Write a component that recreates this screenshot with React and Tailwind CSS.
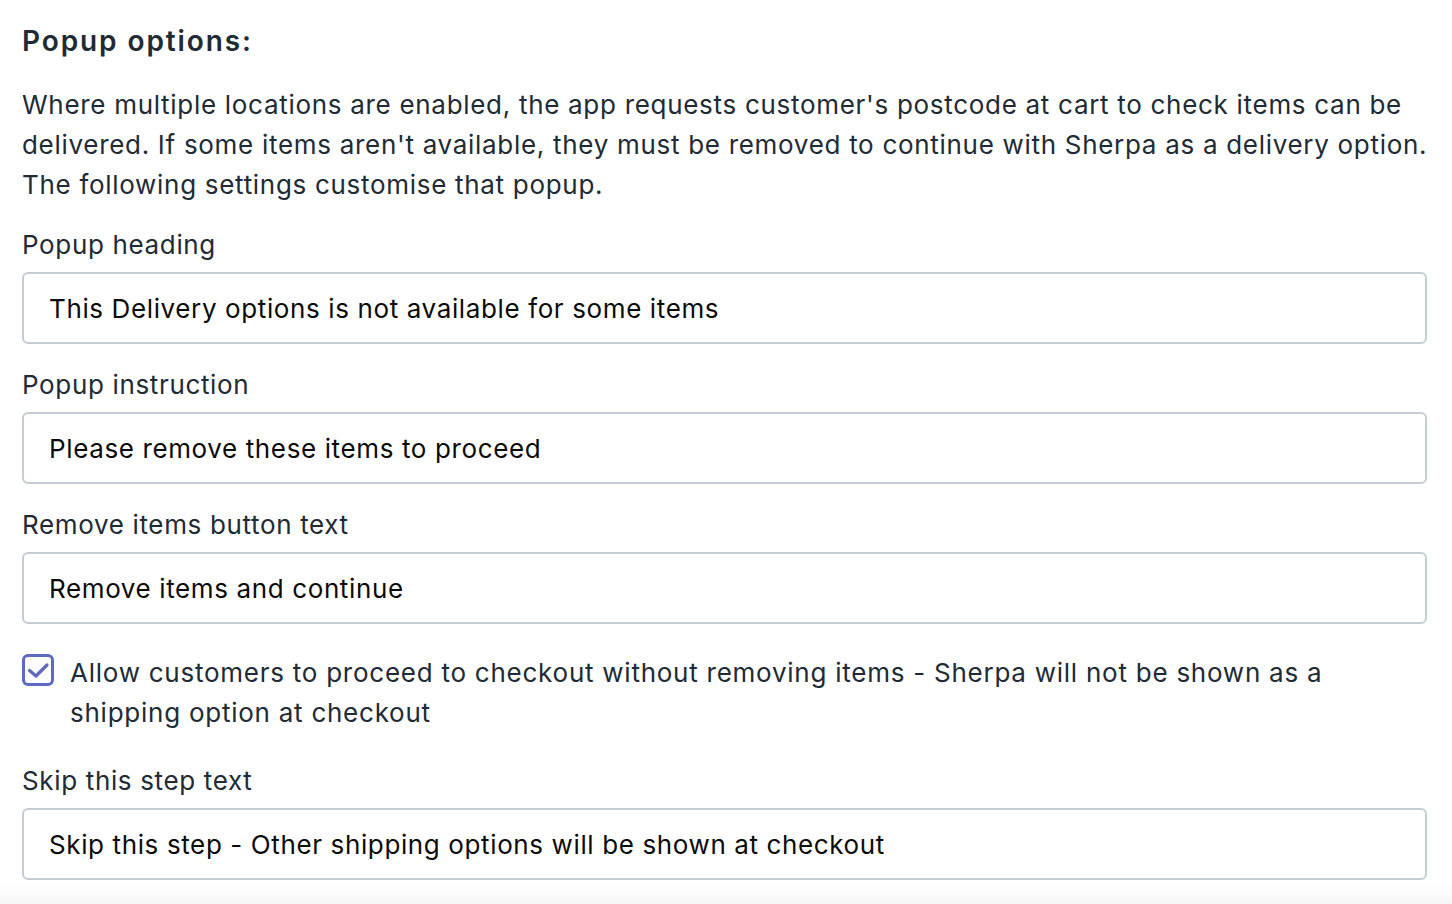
import React from "react";

function Field({ label, value }) {
  return (
    <div className="flex flex-col">
      <div className="text-[26px] leading-[40px] tracking-[0.65px] text-[#212b36]">{label}</div>
      <div className="mt-[7px] h-[72px] rounded-[6px] border-2 border-[#c4cdd5] bg-white flex items-center pl-[25px] text-[26px] tracking-[0.62px] text-[#0b0b0b]">
        {value}
      </div>
    </div>
  );
}

export default function App() {
  return (
    <div
      className="w-[1452px] h-[904px] bg-white overflow-hidden relative"
      style={{ fontFamily: "Inter, 'Noto Sans', sans-serif" }}
    >
      <div className="px-[22px] pr-[25px] pt-[21px] flex flex-col">
        <h2 className="text-[28px] leading-[40px] font-semibold tracking-[1.9px] text-[#212b36]">Popup options:</h2>
        <p className="mt-[24px] -mr-[25px] text-[26px] leading-[40px] tracking-[0.7px] text-[#212b36]">
          Where multiple locations are enabled, the app requests customer's postcode at cart to check items can be delivered. If some items aren't available, they must be removed to continue with Sherpa as a delivery option. The following settings customise that popup.
        </p>
        <div className="mt-[20px] flex flex-col gap-[21px]">
          <Field label="Popup heading" value="This Delivery options is not available for some items" />
          <Field label="Popup instruction" value="Please remove these items to proceed" />
          <Field label="Remove items button text" value="Remove items and continue" />
        </div>
        <div className="mt-[29px] flex items-start">
          <div className="relative mt-[1px] w-[32px] h-[32px] shrink-0 rounded-[6px] border-[3px] border-[#5c6ac4] bg-white">
            <svg className="absolute -left-[3px] -top-[3px]" width="32" height="32" viewBox="0 0 32 32" fill="none">
              <path d="M7.5 16.5l6.5 5.5 11-11" stroke="#5c6ac4" strokeWidth="3.2" strokeLinecap="round" strokeLinejoin="round" />
            </svg>
          </div>
          <div className="ml-[16px] text-[26px] leading-[40px] tracking-[0.75px] text-[#212b36]">
            Allow customers to proceed to checkout without removing items - Sherpa will not be shown as a shipping option at checkout
          </div>
        </div>
        <div className="mt-[28px]">
          <Field label="Skip this step text" value="Skip this step - Other shipping options will be shown at checkout" />
        </div>
      </div>
      <div className="absolute left-0 right-0 bottom-0 h-[20px] bg-gradient-to-b from-white to-[#f7f7f7]" />
    </div>
  );
}
